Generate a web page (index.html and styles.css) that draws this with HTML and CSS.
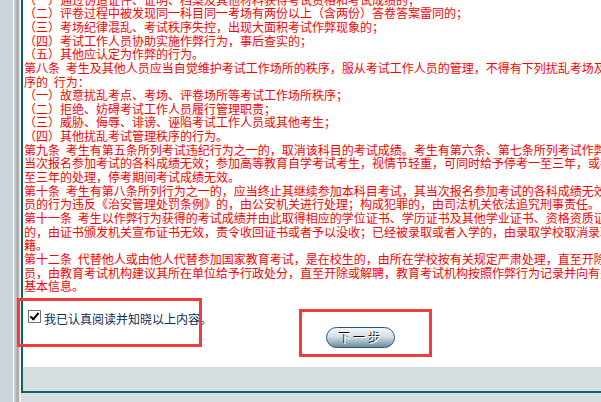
FILE: index.html
```html
<!DOCTYPE html>
<html>
	<head>
		<meta charset="utf-8">
		<title>考生须知</title>
		<link rel="stylesheet" href="styles.css">
	</head>
	<body>
		<div class="page">
			<div class="side"></div>
			<div class="split"></div>
			<div class="frame">
				<div class="content">
					<div class="rules">
						（一）通过伪造证件、证明、档案及其他材料获得考试资格和考试成绩的；<br>
						（二）评卷过程中被发现同一科目同一考场有两份以上（含两份）答卷答案雷同的；<br>
						（三）考场纪律混乱、考试秩序失控，出现大面积考试作弊现象的；<br>
						（四）考试工作人员协助实施作弊行为，事后查实的；<br>
						（五）其他应认定为作弊的行为。<br>
						第八条 考生及其他人员应当自觉维护考试工作场所的秩序，服从考试工作人员的管理，不得有下列扰乱考场及考试工作场所秩<br>
						序的 行为：<br>
						（一）故意扰乱考点、考场、评卷场所等考试工作场所秩序；<br>
						（二）拒绝、妨碍考试工作人员履行管理职责；<br>
						（三）威胁、侮辱、诽谤、诬陷考试工作人员或其他考生；<br>
						（四）其他扰乱考试管理秩序的行为。<br>
						第九条 考生有第五条所列考试违纪行为之一的，取消该科目的考试成绩。考生有第六条、第七条所列考试作弊行为之一的，其<br>
						当次报名参加考试的各科成绩无效；参加高等教育自学考试考生，视情节轻重，可同时给予停考一至三年，或者停考一<br>
						至三年的处理，停考期间考试成绩无效。<br>
						第十条 考生有第八条所列行为之一的，应当终止其继续参加本科目考试，其当次报名参加考试的各科成绩无效；考生及其他人<br>
						员的行为违反《治安管理处罚条例》的，由公安机关进行处理；构成犯罪的，由司法机关依法追究刑事责任。<br>
						第十一条 考生以作弊行为获得的考试成绩并由此取得相应的学位证书、学历证书及其他学业证书、资格资质证书或者入学资<br>
						的，由证书颁发机关宣布证书无效，责令收回证书或者予以没收；已经被录取或者入学的，由录取学校取消录取资格或者其学<br>
						籍。<br>
						第十二条 代替他人或由他人代替参加国家教育考试，是在校生的，由所在学校按有关规定严肃处理，直至开除学籍；其他人<br>
						员，由教育考试机构建议其所在单位给予行政处分，直至开除或解聘，教育考试机构按照作弊行为记录并向有关部门通报其<br>
						基本信息。
					</div>
					<label class="agree">
						<input type="checkbox" class="agree-box" checked>
						<span class="agree-text">我已认真阅读并知晓以上内容。</span>
					</label>
					<div class="next-row">
						<button type="button" class="next-btn">下一步</button>
					</div>
				</div>
				<div class="foot"></div>
			</div>
		</div>
		<!-- 标注框 -->
		<div class="mark mark-agree"></div>
		<div class="mark mark-next"></div>
	</body>
</html>
```
FILE: styles.css
```css
html,
body {
	margin: 0;
	overflow: hidden;
}

body {
	background: #d5dde0;
	font-family: "Noto Sans CJK SC", sans-serif;
	font-size: 12px;
	position: relative;
	height: 402px;
}

.page {
	display: flex;
	height: 402px;
}

.side {
	width: 13px;
	flex: none;
	background: #ccd7db;
}

.split {
	width: 8px;
	flex: none;
	background: linear-gradient(to right, #fff 0, #fff 1px, #d2d2d2 1px, #c4c4c4 3px, #a6a6a6 4px, #b4b4b4 6px, #e2e2e2 6px, #f4f4f4 8px);
}

.frame {
	width: 674px;
	flex: none;
	align-self: flex-start;
	border-left: 2px solid #0b6663;
	border-bottom: 2px solid #0b6663;
}

.content {
	height: 367px;
	background: #fff;
	overflow: hidden;
}

.rules {
	margin-top: -7.45px;
	padding-left: 1px;
	color: #f00;
	line-height: 13.65px;
	white-space: nowrap;
	word-spacing: 3px;
	text-spacing-trim: space-all;
}

.agree {
	display: flex;
	align-items: flex-start;
	gap: 3px;
	margin-top: 17px;
	padding-left: 5px;
	color: #0b2d5c;
}

.agree-box {
	appearance: none;
	margin: 0;
	width: 13px;
	height: 13px;
	border: 1px solid #6f6f6f;
	background: #fff;
	position: relative;
}

.agree-box:checked::after {
	content: "";
	position: absolute;
	left: 3px;
	top: 0;
	width: 3px;
	height: 7px;
	border-right: 2px solid #000;
	border-bottom: 2px solid #000;
	transform: rotate(40deg);
}

.agree-text {
	margin-top: 2px;
	line-height: 14px;
}

.next-row {
	margin-top: 1px;
	text-align: center;
}

.next-btn {
	box-sizing: border-box;
	width: 69px;
	height: 21px;
	padding: 0 0 0 3px;
	border: 1px solid #25557c;
	border-radius: 11px;
	background: linear-gradient(#f2f5f7, #d6e0e5 45%, #a3b8c2 72%, #6e8c9b);
	color: #fff;
	font-family: "Noto Sans CJK SC", sans-serif;
	font-size: 12px;
	line-height: 19px;
	letter-spacing: 3px;
	text-shadow: -1px -1px 0 #111;
}

.foot {
	height: 24px;
	background: #d5dde0;
}

.mark {
	position: absolute;
	border: 3px solid #f33b3b;
	box-sizing: border-box;
}

.mark-agree {
	left: 17px;
	top: 298px;
	width: 185px;
	height: 49px;
}

.mark-next {
	left: 299px;
	top: 309px;
	width: 133px;
	height: 48px;
}
```
